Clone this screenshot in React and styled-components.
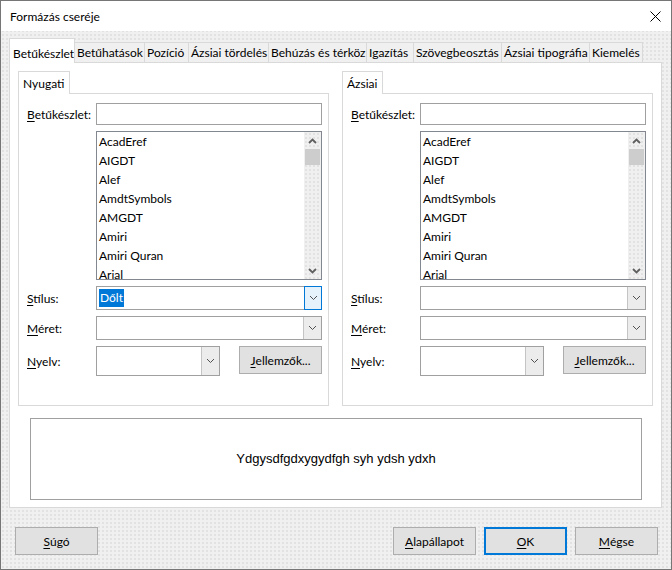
import React from 'react';
import styled, {createGlobalStyle, css} from 'styled-components';

const GlobalStyle = createGlobalStyle`
  html, body {
    margin: 0;
    padding: 0;
    background: #f0f0f0;
  }
  body {
    font-family: Lato, "Noto Sans", sans-serif;
    font-size: 12px;
    color: #000;
  }
  u {
    text-decoration-thickness: 1px;
    text-underline-offset: 2px;
  }
`;

const dots = css`
  background-color: #f0f0f0;
  background-image: radial-gradient(circle, #e2e2e2 0.7px, transparent 0.9px);
  background-size: 4px 4px;
`;

const Window = styled.div`
  width: 672px;
  height: 570px;
  box-sizing: border-box;
  border: 1px solid #767676;
  display: flex;
  flex-direction: column;
  ${dots};
`;

const TitleBar = styled.div`
  height: 30px;
  flex: none;
  background: #fff;
  display: flex;
  align-items: center;
  justify-content: space-between;
  padding: 0 10px 0 9px;
`;

const Body = styled.div`
  padding: 7px 9px 0 8px;
  display: flex;
  flex-direction: column;
`;

const TabStrip = styled.div`
  display: flex;
  align-items: flex-end;
  height: 24px;
`;

const Tab = styled.div`
  box-sizing: border-box;
  width: ${p => p.w}px;
  height: ${p => p.active ? 25 : 21}px;
  margin-bottom: -1px;
  padding-left: ${p => p.active ? 3 : 2}px;
  padding-top: ${p => p.active ? 4 : 0}px;
  display: flex;
  align-items: center;
  white-space: nowrap;
  overflow: hidden;
  border: 1px solid #d9d9d9;
  border-bottom: ${p => p.active ? 'none' : '1px solid #d9d9d9'};
  border-left: ${p => p.first || p.active ? '1px solid #d9d9d9' : 'none'};
  background: ${p => p.active ? '#fff' : '#f0f0f0'};
  position: relative;
  z-index: ${p => p.active ? 2 : 1};
`;

const Page = styled.div`
  box-sizing: border-box;
  height: 446px;
  border: 1px solid #d9d9d9;
  background: #fff;
  padding: 8px 8px 0 8px;
  display: flex;
  flex-direction: column;
`;

const Columns = styled.div`
  display: flex;
  gap: 13px;
`;

const Group = styled.div`
  width: 311px;
  display: flex;
  flex-direction: column;
`;

const GroupTab = styled.div`
  box-sizing: border-box;
  align-self: flex-start;
  height: 23px;
  margin-bottom: -1px;
  padding: 0 5px 0 4px;
  display: flex;
  align-items: center;
  border: 1px solid #d9d9d9;
  border-bottom: none;
  background: #fff;
  position: relative;
  z-index: 1;
`;

const GroupPanel = styled.div`
  box-sizing: border-box;
  height: 313px;
  border: 1px solid #d9d9d9;
  padding: 9px 6px 0 8px;
  display: grid;
  grid-template-columns: 69px 1fr;
  grid-template-rows: 22px 149px 24px 24px 30px;
  row-gap: 6px;
  align-items: center;
`;

const Label = styled.div`
  grid-column: 1;
  white-space: nowrap;
`;

const Field = styled.div`
  grid-column: 2;
  height: 100%;
  display: flex;
`;

const TextBox = styled.div`
  flex: 1;
  box-sizing: border-box;
  border: 1px solid #a0a0a0;
  background: #fff;
`;

const List = styled.div`
  flex: 1;
  box-sizing: border-box;
  border: 1px solid #828790;
  background: #fff;
  display: flex;
  overflow: hidden;
`;

const Items = styled.div`
  flex: 1;
  overflow: hidden;
`;

const Item = styled.div`
  height: 19px;
  line-height: 19px;
  padding-left: 2px;
  white-space: nowrap;
`;

const ScrollBar = styled.div`
  width: 17px;
  display: flex;
  flex-direction: column;
  ${dots};
`;

const ScrollArrow = styled.div`
  height: 17px;
  display: flex;
  align-items: center;
  justify-content: center;
`;

const Thumb = styled.div`
  height: 16px;
  margin: 0 1px;
  background: #cdcdcd;
`;

const Track = styled.div`
  flex: 1;
`;

const Combo = styled.div`
  box-sizing: border-box;
  width: ${p => p.w ? `${p.w}px` : 'auto'};
  flex: ${p => p.w ? 'none' : 1};
  border: 1px solid #a0a0a0;
  background: #fff;
  display: flex;
`;

const ComboText = styled.div`
  flex: 1;
  display: flex;
  align-items: center;
  padding-left: 2px;
`;

const Selected = styled.span`
  background: #0078d7;
  color: #fff;
  line-height: 18px;
  padding: 0 1px;
`;

const DropButton = styled.div`
  box-sizing: border-box;
  width: 18px;
  display: flex;
  align-items: center;
  justify-content: center;
  ${p => p.focused ? css`
    border: 1px solid #0078d7;
    background: #e5f1fb;
    margin: -1px -1px -1px 0;
    width: 18px;
  ` : css`
    border-left: 1px solid #c4c4c4;
    background: #ececec;
  `}
`;

const Button = styled.div`
  box-sizing: border-box;
  width: 83px;
  height: 28px;
  flex: none;
  display: flex;
  align-items: center;
  justify-content: center;
  background: #e1e1e1;
  border: ${p => p.primary ? '2px solid #0078d7' : '1px solid #adadad'};
  margin-left: ${p => p.push ? 'auto' : '0'};
`;

const Preview = styled.div`
  box-sizing: border-box;
  height: 82px;
  margin: 12px 11px 0 12px;
  border: 1px solid #a0a0a0;
  display: flex;
  align-items: center;
  justify-content: center;
  font-family: "Liberation Sans", Arial, sans-serif;
  font-size: 13px;
  padding-bottom: 1px;
`;

const Footer = styled.div`
  display: flex;
  gap: 8px;
  padding: 19px 13px 0 14px;
`;

const Chevron = ({up, bold}) => (
  <svg width="9" height="6" viewBox="0 0 9 6">
    <polyline
      points={up ? '1,5 4.5,1.5 8,5' : '1,1 4.5,4.5 8,1'}
      fill="none"
      stroke={bold ? '#606060' : '#505050'}
      strokeWidth={bold ? 1.8 : 1}
    />
  </svg>
);

const CloseIcon = () => (
  <svg width="11" height="11" viewBox="0 0 11 11">
    <path d="M0.5 0.5 L10.5 10.5 M10.5 0.5 L0.5 10.5" stroke="#000" strokeWidth="1" />
  </svg>
);

const tabs = [
  ['Betűkészlet', 66],
  ['Betűhatások', 70],
  ['Pozíció', 44],
  ['Ázsiai tördelés', 80],
  ['Behúzás és térköz', 98],
  ['Igazítás', 47],
  ['Szövegbeosztás', 88],
  ['Ázsiai tipográfia', 88],
  ['Kiemelés', 53],
];

const fonts = ['AcadEref', 'AIGDT', 'Alef', 'AmdtSymbols', 'AMGDT', 'Amiri', 'Amiri Quran', 'Arial'];

const Accel = ({text}) => (
  <>
    <u>{text[0]}</u>{text.slice(1)}
  </>
);

const FontGroup = ({title, style}) => (
  <Group>
    <GroupTab>{title}</GroupTab>
    <GroupPanel>
      <Label><Accel text="Betűkészlet:" /></Label>
      <Field><TextBox /></Field>

      <Field>
        <List>
          <Items>
            {fonts.map(f => <Item key={f}>{f}</Item>)}
          </Items>
          <ScrollBar>
            <ScrollArrow><Chevron up bold /></ScrollArrow>
            <Thumb />
            <Track />
            <ScrollArrow><Chevron bold /></ScrollArrow>
          </ScrollBar>
        </List>
      </Field>

      <Label><Accel text="Stílus:" /></Label>
      <Field>
        <Combo>
          <ComboText>{style && <Selected>{style}</Selected>}</ComboText>
          <DropButton focused={!!style}><Chevron /></DropButton>
        </Combo>
      </Field>

      <Label><Accel text="Méret:" /></Label>
      <Field>
        <Combo>
          <ComboText />
          <DropButton><Chevron /></DropButton>
        </Combo>
      </Field>

      <Label><Accel text="Nyelv:" /></Label>
      <Field>
        <Combo w={124}>
          <ComboText />
          <DropButton><Chevron /></DropButton>
        </Combo>
        <Button push><Accel text="Jellemzők..." /></Button>
      </Field>
    </GroupPanel>
  </Group>
);

export default function App() {
  return (
    <>
      <GlobalStyle />
      <Window>
        <TitleBar>
          <span>Formázás cseréje</span>
          <CloseIcon />
        </TitleBar>
        <Body>
          <TabStrip>
            {tabs.map(([name, w], i) => (
              <Tab key={name} w={w} active={i === 0} first={i === 0}>{name}</Tab>
            ))}
          </TabStrip>
          <Page>
            <Columns>
              <FontGroup title="Nyugati" style="Dőlt" />
              <FontGroup title="Ázsiai" />
            </Columns>
            <Preview>Ydgysdfgdxygydfgh syh ydsh ydxh</Preview>
          </Page>
        </Body>
        <Footer>
          <Button><Accel text="Súgó" /></Button>
          <Button push><Accel text="Alapállapot" /></Button>
          <Button primary><Accel text="OK" /></Button>
          <Button><Accel text="Mégse" /></Button>
        </Footer>
      </Window>
    </>
  );
}
